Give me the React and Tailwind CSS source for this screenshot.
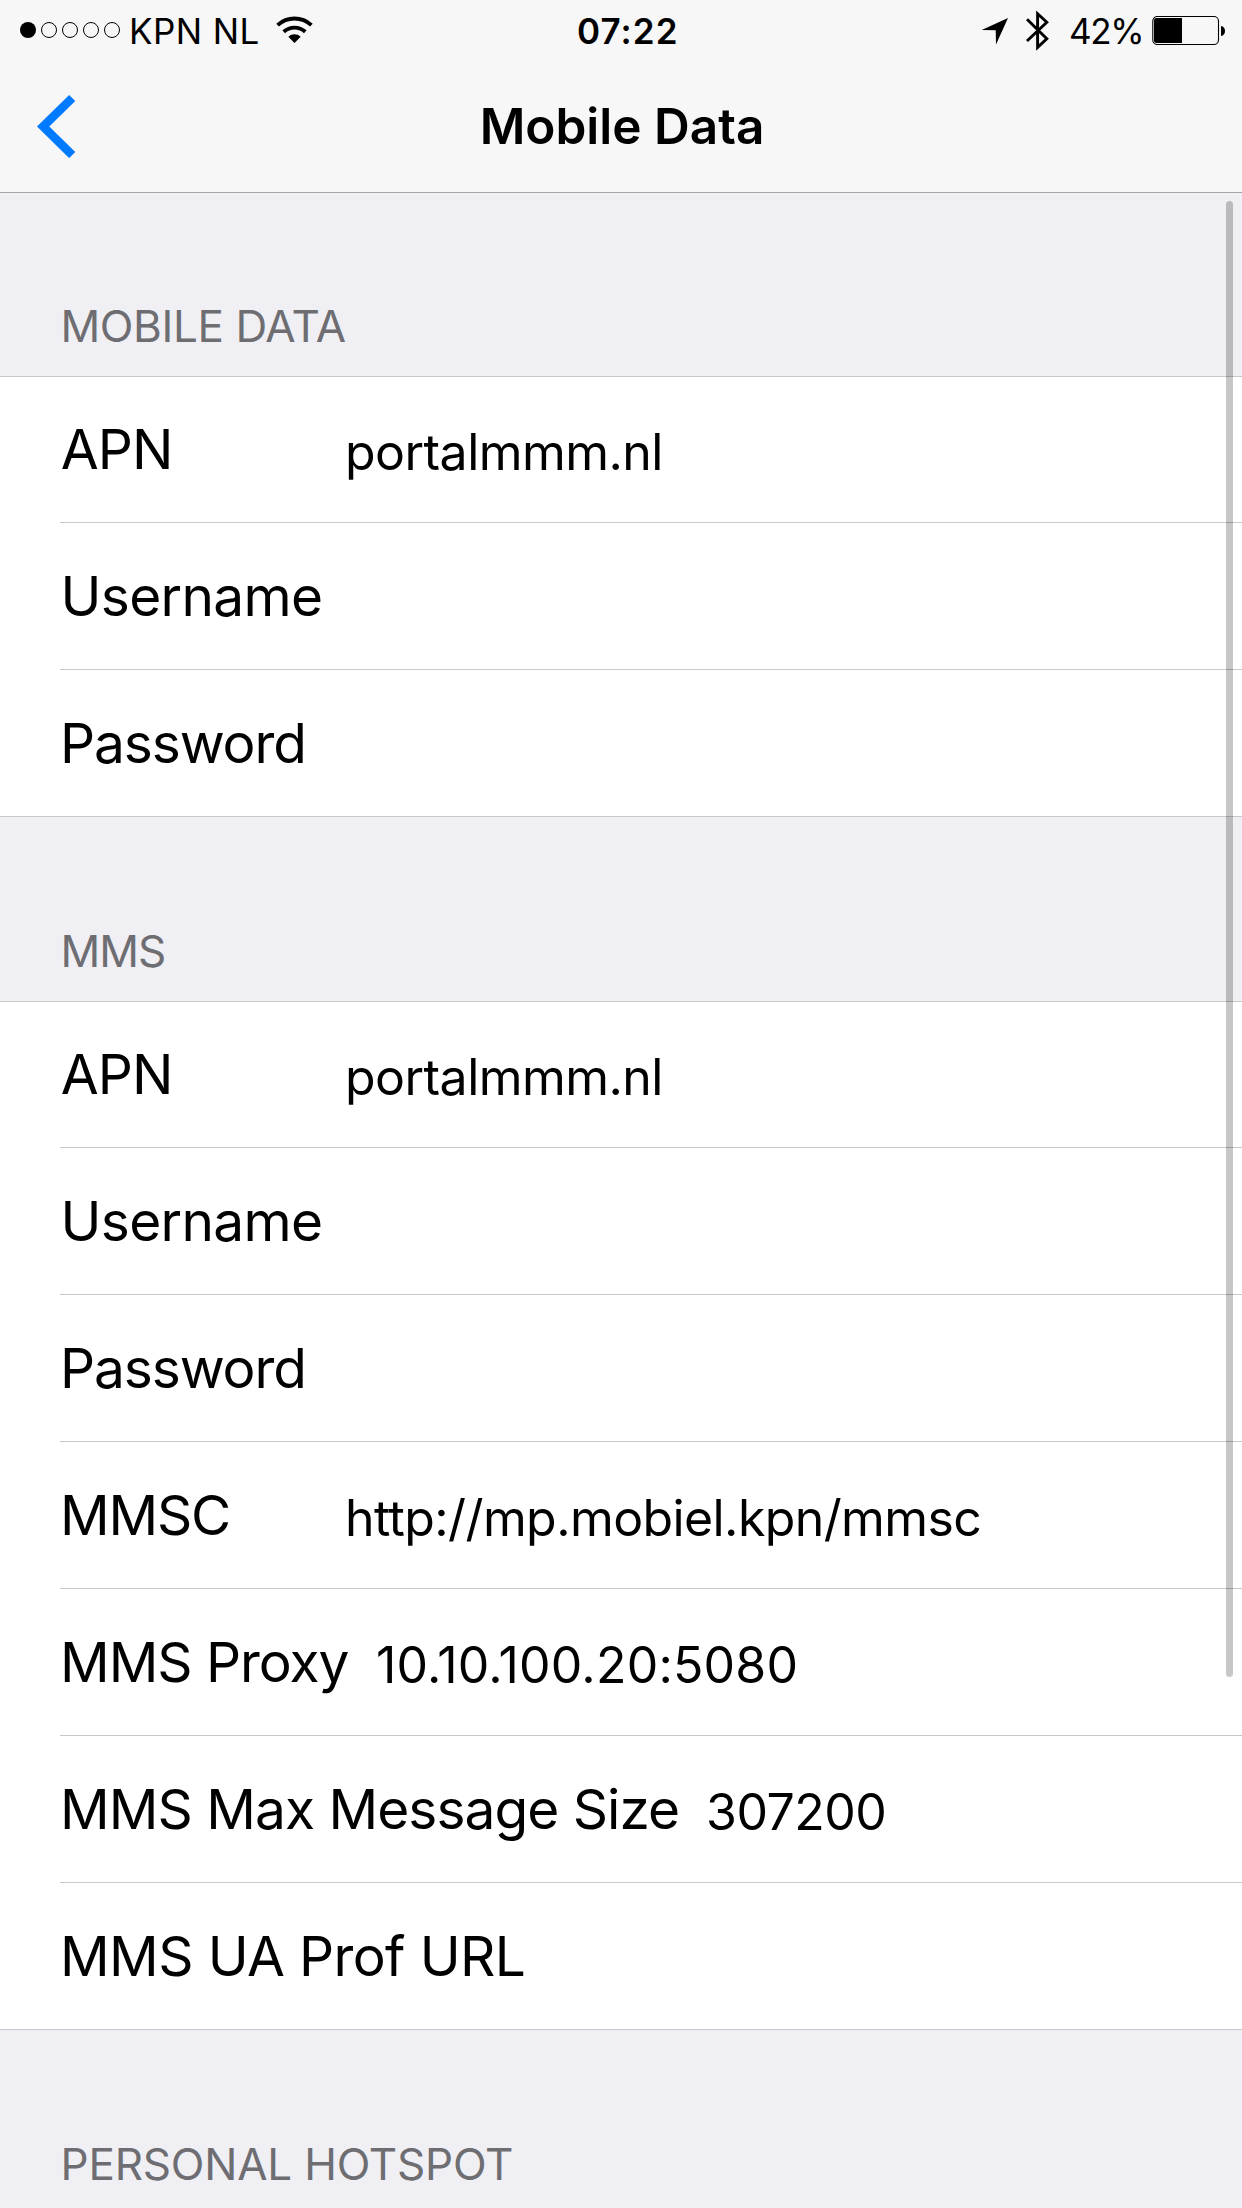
import React from "react";

const mobileData = [
  { label: "APN", labelClass: "tracking-[-0.9px] pl-[0.7px] w-[285px]", value: "portalmmm.nl", valueClass: "tracking-[-0.55px]" },
  { label: "Username", labelClass: "tracking-[-0.65px] pl-[0.5px]" },
  { label: "Password", labelClass: "tracking-[-1.1px]" },
];

const mms = [
  ...mobileData,
  { label: "MMSC", labelClass: "tracking-[-1.2px] w-[285px]", value: "http://mp.mobiel.kpn/mmsc", valueClass: "tracking-[-0.6px]" },
  { label: "MMS Proxy", labelClass: "tracking-[-1.04px] w-[316px]", value: "10.10.100.20:5080", valueClass: "tracking-[0.2px]" },
  { label: "MMS Max Message Size", labelClass: "tracking-[-0.96px] w-[646px]", value: "307200", valueClass: "tracking-[-0.5px]" },
  { label: "MMS UA Prof URL", labelClass: "tracking-[-0.62px]" },
];

function SignalDots() {
  return (
    <svg className="h-4 w-[100px] shrink-0" viewBox="0 0 100 16">
      <circle cx="8" cy="8" r="8" />
      {[29, 50, 71, 92].map((cx) => (
        <circle key={cx} cx={cx} cy="8" r="7.5" fill="none" stroke="#000" strokeWidth="1" />
      ))}
    </svg>
  );
}

function Wifi() {
  return (
    <svg className="h-7 w-[37px] shrink-0" viewBox="0 0 37 28">
      <path d="M1.6 9.1a25 25 0 0 1 33.8 0M7.7 15.8a16 16 0 0 1 21.6 0" fill="none" stroke="#000" strokeWidth="3.9" />
      <path d="M18.5 27l-6.2-6.2a9 9 0 0 1 12.4 0z" />
    </svg>
  );
}

function StatusBar() {
  return (
    <div className="flex h-[60px] items-start pl-5 pr-4 text-[35px] leading-[42px]">
      <div className="flex w-[556px] items-start">
        <div className="pt-[22px]">
          <SignalDots />
        </div>
        <span className="ml-[9px] mt-[10px] w-[147px] whitespace-nowrap tracking-[0.4px]">KPN NL</span>
        <div className="pt-4">
          <Wifi />
        </div>
      </div>
      <span className="ml-px mt-[10px] font-[570] tracking-[1.1px]">07:22</span>
      <div className="ml-auto flex items-start">
        <svg className="mt-[18px] h-[27px] w-7" viewBox="0 0 28 27">
          <path d="M.7 12L27 0 15 26.5 14.7 12.2z" />
        </svg>
        <svg className="ml-[17px] mt-[9px] h-[43px] w-6" viewBox="0 0 24 43">
          <path d="M1 10.2L20.8 29.7 11.6 38.3V4.7L20.8 13.2 1 32" fill="none" stroke="#000" strokeWidth="2.9" />
        </svg>
        <span className="ml-[19px] mt-[10px] w-[83px] whitespace-nowrap tracking-[-1.3px]">42%</span>
        <svg className="mt-4 h-[29px] w-[74px]" viewBox="0 0 74 29">
          <rect x=".8" y=".5" width="65.7" height="28" rx="4.5" fill="none" stroke="#000" strokeWidth="1.1" />
          <path d="M30 2v25H4.500q-2.500 0-2.500-2.500v-20Q2 2 4.500 2z" />
          <path d="M69 10q4 .8 4 5t-4 5z" />
        </svg>
      </div>
    </div>
  );
}

function NavBar() {
  return (
    <div className="grid grid-cols-[200px_1fr_200px]">
      <div className="pl-9 pt-[34px]">
        <svg className="h-16 w-10" viewBox="0 0 40 64">
          <path d="M36.200 4L7.200 32.500 36.200 61" fill="none" stroke="#007aff" strokeWidth="8.700" />
        </svg>
      </div>
      <h1 className="pl-[2px] pt-9 text-center text-[49.5px] leading-[60px] font-[590]">Mobile Data</h1>
    </div>
  );
}

function SectionTitle({ className, children }) {
  return <h2 className={`pl-[60.5px] text-[44px] leading-[54px] text-[#6d6d72] ${className}`}>{children}</h2>;
}

function FieldList({ rows }) {
  return (
    <div className="border-y border-[#c8c7cc] bg-white pl-[60px]">
      {rows.map((row, i) => (
        <div
          key={row.label}
          className={`flex items-start whitespace-nowrap border-[#c8c7cc] ${i === 0 ? "h-[146px] pt-[39px]" : "h-[147px] pt-10"} ${
            i === rows.length - 1 ? "-mb-px" : "border-b"
          }`}
        >
          <span className={`shrink-0 text-[55px] leading-[66px] ${row.labelClass}`}>{row.label}</span>
          {row.value && <span className={`mt-[6px] text-[50px] leading-[60px] ${row.valueClass}`}>{row.value}</span>}
        </div>
      ))}
    </div>
  );
}

export default function App() {
  return (
    <div className="relative h-[2208px] w-[1242px] overflow-hidden bg-[#efeff4] font-[Inter,sans-serif] text-black">
      <header className="h-[193px] border-b border-[#a7a7aa] bg-[#f7f7f7]">
        <StatusBar />
        <NavBar />
      </header>
      <SectionTitle className="h-[183px] pt-[106px] tracking-[-0.4px]">MOBILE DATA</SectionTitle>
      <FieldList rows={mobileData} />
      <SectionTitle className="h-[184px] pt-[107px] tracking-[-1px]">MMS</SectionTitle>
      <FieldList rows={mms} />
      <SectionTitle className="pt-[107px] tracking-[-0.2px]">PERSONAL HOTSPOT</SectionTitle>
      <div className="absolute right-[9px] top-[201px] h-[1476px] w-[7px] rounded-full bg-black/22" />
    </div>
  );
}
